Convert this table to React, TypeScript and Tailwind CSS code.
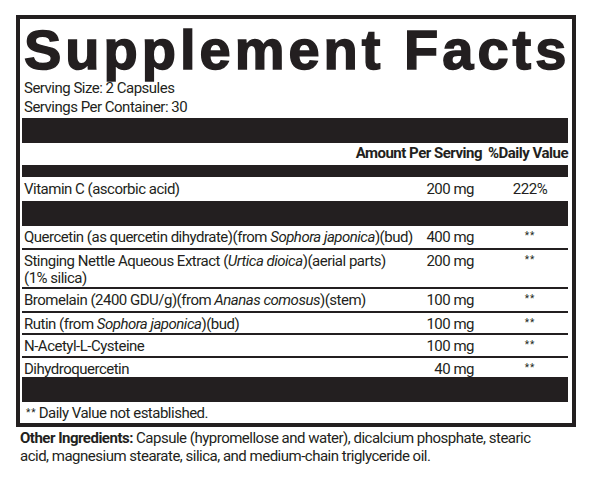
const body = "font-['Roboto','Liberation_Sans',sans-serif] tracking-[-0.5px]";

type Row = {
  name: React.ReactNode;
  amount: string;
  h: string;
};

const rows: Row[] = [
  {
    name: (
      <>
        Quercetin (as quercetin dihydrate)(from <i>Sophora japonica</i>)(bud)
      </>
    ),
    amount: "400 mg",
    h: "h-[24px]",
  },
  {
    name: (
      <>
        Stinging Nettle Aqueous Extract (<i>Urtica dioica</i>)(aerial parts)
        <br />
        (1% silica)
      </>
    ),
    amount: "200 mg",
    h: "h-[39px]",
  },
  {
    name: (
      <>
        Bromelain (2400 GDU/g)(from <i>Ananas comosus</i>)(stem)
      </>
    ),
    amount: "100 mg",
    h: "h-[24px]",
  },
  {
    name: (
      <>
        Rutin (from <i>Sophora japonica</i>)(bud)
      </>
    ),
    amount: "100 mg",
    h: "h-[22px]",
  },
  { name: "N-Acetyl-L-Cysteine", amount: "100 mg", h: "h-[23px]" },
  { name: "Dihydroquercetin", amount: "40 mg", h: "h-[19px]" },
];

function Stars() {
  return <span className="text-[10px] leading-none tracking-[1px]">**</span>;
}

export default function App() {
  return (
    <div className={`w-[592px] h-[492px] bg-white text-[#231f20] ${body}`}>
      <div className="pt-[15px] pl-4">
        <div className="w-[560px] border-4 border-[#231f20] pl-[2px] pr-[4px]">
          <h1 className="h-[60px] pl-[2px] pt-[3px] font-['Liberation_Sans',Arial,sans-serif] text-[56px] font-bold leading-[56px] tracking-[4px] [-webkit-text-stroke:1.5px_#231f20] whitespace-nowrap">
            Supplement Facts
          </h1>
          <div className="pl-[2px] text-[15px] leading-[19px]">
            <p>Serving Size: 2 Capsules</p>
            <p>Servings Per Container: 30</p>
          </div>
          <div className="mt-[1px] h-[25px] bg-[#231f20]" />
          <div className="flex h-[22px] items-end justify-end gap-[6px] pb-[3px] text-[15px] font-bold leading-[18px]">
            <span>Amount Per Serving</span>
            <span>%Daily Value</span>
          </div>
          <div className="h-[12px] bg-[#231f20]" />
          <div className="flex h-[24px] items-center text-[15px] leading-[18px]">
            <span className="flex-1 pl-[2px]">Vitamin C (ascorbic acid)</span>
            <span className="w-[60px] text-right whitespace-nowrap">200 mg</span>
            <span className="ml-[18px] w-[76px] text-center">222%</span>
          </div>
          <div className="h-[25px] bg-[#231f20]" />
          {rows.map((r, i) => (
            <div
              key={i}
              className={`flex ${r.h} pt-[3px] text-[15px] leading-[17px] ${i < rows.length - 1 ? "border-b-2 border-[#231f20]" : ""}`}
            >
              <span className="flex-1 pl-[2px] whitespace-nowrap">{r.name}</span>
              <span className="w-[60px] text-right whitespace-nowrap">{r.amount}</span>
              <span className="ml-[18px] w-[76px] text-center leading-[10px]">
                <Stars />
              </span>
            </div>
          ))}
          <div className="h-[25px] bg-[#231f20]" />
          <div className="flex h-[21px] items-center gap-[2px] pl-[4px] text-[15px] leading-[18px]">
            <Stars />
            <span>Daily Value not established.</span>
          </div>
        </div>
        <p className="mt-[2px] pl-1 text-[15px] leading-[18px] whitespace-nowrap">
          <b>Other Ingredients:</b> Capsule (hypromellose and water), dicalcium phosphate, stearic
          <br />
          acid, magnesium stearate, silica, and medium-chain triglyceride oil.
        </p>
      </div>
    </div>
  );
}
